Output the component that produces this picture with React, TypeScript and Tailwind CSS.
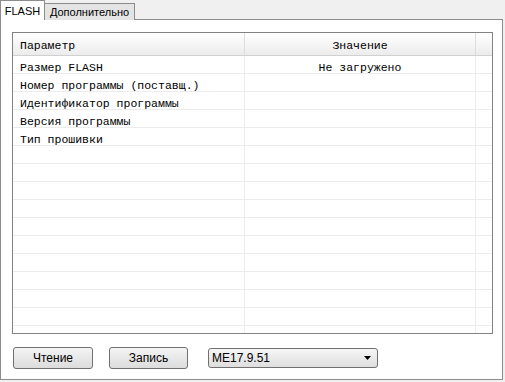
const rows = [
  { name: 'Размер FLASH', value: 'Не загружено' },
  { name: 'Номер программы (поставщ.)', value: '' },
  { name: 'Идентификатор программы', value: '' },
  { name: 'Версия программы', value: '' },
  { name: 'Тип прошивки', value: '' },
];

const emptyRows = Array.from({ length: 11 });

const App = () => {
  return (
    <div className="w-[505px] h-[382px] bg-[#f0f0f0] overflow-hidden font-['Liberation_Sans',sans-serif] text-[11px] text-black">
      {/* Tabs */}
      <div className="flex items-end h-[20px] relative z-10">
        <div className="h-[20px] w-[45px] bg-white border border-b-0 border-[#8c8c8c] flex items-center justify-center pt-[1px]">
          FLASH
        </div>
        <div className="h-[17px] w-[90px] bg-[#e4e4e4] border border-l-0 border-b-0 border-[#8c8c8c] flex items-center justify-center">
          Дополнительно
        </div>
      </div>

      {/* Panel */}
      <div className="-mt-px w-[503px] h-[361px] bg-white border border-[#8c8c8c] flex flex-col">
        <div className="mt-[12px] ml-[11px] w-[481px] h-[302px] border border-[#828282] flex flex-col overflow-hidden font-['Liberation_Mono',monospace] text-[11.5px] leading-[13px]">
          <div className="flex h-[23px] shrink-0 border-b border-[#d0d0d0] bg-gradient-to-b from-[#ffffff] to-[#ececec]">
            <div className="w-[232px] border-r border-[#dcdcdc] pl-[7px] pt-[6px]">Параметр</div>
            <div className="w-[231px] border-r border-[#dcdcdc] pt-[6px] text-center">Значение</div>
            <div className="flex-1" />
          </div>
          {rows.map((r) => (
            <div key={r.name} className="flex h-[18px] shrink-0 border-b border-[#ececec]">
              <div className="w-[232px] border-r border-[#ececec] pl-[7px] pt-[5px] whitespace-pre">{r.name}</div>
              <div className="w-[231px] border-r border-[#ececec] pt-[5px] text-center">{r.value}</div>
              <div className="flex-1" />
            </div>
          ))}
          {emptyRows.map((_, i) => (
            <div key={i} className="flex h-[18px] shrink-0 border-b border-[#ececec]">
              <div className="w-[232px] border-r border-[#ececec]" />
              <div className="w-[231px] border-r border-[#ececec]" />
              <div className="flex-1" />
            </div>
          ))}
        </div>

        {/* Buttons */}
        <div className="flex items-center mt-[13px] ml-[12px] text-[12px]">
          <button className="w-[80px] h-[22px] rounded-[3px] border border-[#707070] bg-gradient-to-b from-[#f4f4f4] to-[#dcdcdc] flex items-center justify-center">
            Чтение
          </button>
          <button className="ml-[16px] w-[79px] h-[22px] rounded-[3px] border border-[#707070] bg-gradient-to-b from-[#f4f4f4] to-[#dcdcdc] flex items-center justify-center">
            Запись
          </button>
          <div className="ml-[20px] w-[170px] h-[20px] rounded-[3px] border border-[#707070] bg-gradient-to-b from-[#f6f6f6] to-[#dedede] flex items-center pl-[3px] pr-[6px]">
            <span className="flex-1">ME17.9.51</span>
            <svg width="7" height="4" viewBox="0 0 7 4">
              <path d="M0 0 H7 L3.5 4 Z" fill="#000" />
            </svg>
          </div>
        </div>
      </div>
    </div>
  );
};

export default App;
